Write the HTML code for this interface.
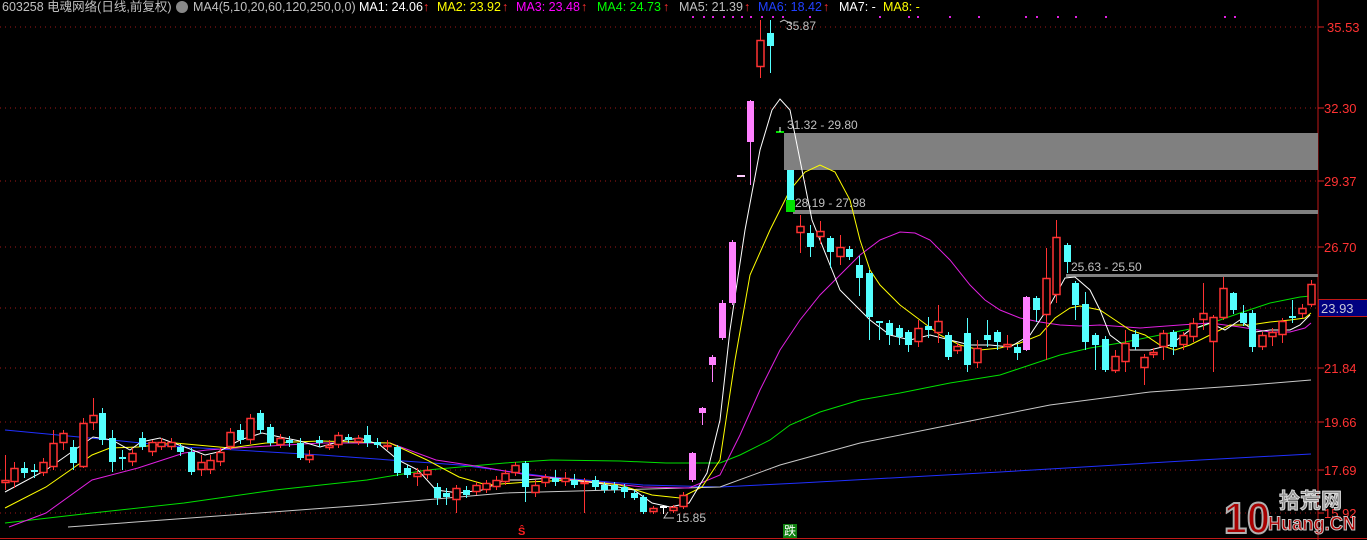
<!DOCTYPE html>
<html><head><meta charset="utf-8">
<style>
html,body{margin:0;padding:0;background:#000;width:1367px;height:540px;overflow:hidden}
svg{display:block}
text{font-family:"Liberation Sans","Noto Sans CJK SC",sans-serif}
</style></head><body>
<svg id="s" width="1367" height="540" viewBox="0 0 1367 540">
<g stroke="#a01818" stroke-width="1" stroke-dasharray="1,4">
<line x1="0" y1="27" x2="1317" y2="27"/><line x1="0" y1="108" x2="1317" y2="108"/><line x1="0" y1="181" x2="1317" y2="181"/><line x1="0" y1="247" x2="1317" y2="247"/><line x1="0" y1="308" x2="1317" y2="308"/><line x1="0" y1="368" x2="1317" y2="368"/><line x1="0" y1="422" x2="1317" y2="422"/><line x1="0" y1="470" x2="1317" y2="470"/><line x1="0" y1="513" x2="1317" y2="513"/>
</g>
<line x1="1318" y1="0" x2="1318" y2="540" stroke="#c01818"/>
<line x1="0" y1="538.5" x2="1367" y2="538.5" stroke="#c01818"/>
<g stroke="#e02020"><line x1="1318" y1="27" x2="1324" y2="27"/><line x1="1318" y1="108" x2="1324" y2="108"/><line x1="1318" y1="181" x2="1324" y2="181"/><line x1="1318" y1="247" x2="1324" y2="247"/><line x1="1318" y1="368" x2="1324" y2="368"/><line x1="1318" y1="422" x2="1324" y2="422"/><line x1="1318" y1="470" x2="1324" y2="470"/><line x1="1318" y1="513" x2="1324" y2="513"/></g>
<g fill="#ff3232" font-size="13">
<text x="1327" y="32">35.53</text><text x="1324" y="113">32.30</text><text x="1324" y="186">29.37</text><text x="1324" y="252">26.70</text><text x="1324" y="373">21.84</text><text x="1324" y="427">19.66</text><text x="1324" y="475">17.69</text><text x="1324" y="518">15.92</text>
</g>
<rect x="1318.5" y="299.5" width="49" height="17" fill="#000080" stroke="#c01818"/>
<text x="1321" y="313" fill="#c8c8d8" font-size="13">23.93</text>
<rect x="784" y="133" width="534" height="37" fill="#808080"/>
<rect x="793" y="210" width="525" height="4" fill="#808080"/>
<rect x="1066" y="274" width="252" height="3" fill="#808080"/>
<g id="ma" fill="none" stroke-width="1"></g>
<g id="cd"></g>
<g font-size="12" fill="#c0c0c0">
<text x="786" y="30">35.87</text>
<text x="787" y="129">31.32 - 29.80</text>
<text x="795" y="207">28.19 - 27.98</text>
<text x="1071" y="271">25.63 - 25.50</text>
<text x="676" y="522">15.85</text>
</g>
<polyline points="780,22 784,20 792,24" fill="none" stroke="#c0c0c0"/>
<polyline points="668,512 664,518 674,518" fill="none" stroke="#c0c0c0"/>
<rect x="786" y="200" width="9" height="12" fill="#00e000"/>
<line x1="776" y1="132" x2="784" y2="132" stroke="#00e000" stroke-width="2"/>
<line x1="780" y1="127" x2="780" y2="132" stroke="#fff"/>
<rect x="737" y="175" width="8" height="2" fill="#ffccff"/>
<g id="dots" fill="#e020e0"></g>
<g font-size="12.5">
<text x="2" y="11" fill="#c0c0c0">603258 电魂网络(日线,前复权)</text>
<circle cx="182" cy="7" r="6" fill="#888"/>
<text x="193" y="11" fill="#c0c0c0">MA4(5,10,20,60,120,250,0,0)</text>
<text x="359" y="11" fill="#ffffff">MA1: 24.06</text><text x="423" y="11" fill="#ff3030">↑</text>
<text x="437" y="11" fill="#ffff00">MA2: 23.92</text><text x="502" y="11" fill="#ff3030">↑</text>
<text x="516" y="11" fill="#ff00ff">MA3: 23.48</text><text x="581" y="11" fill="#ff3030">↑</text>
<text x="597" y="11" fill="#00ff00">MA4: 24.73</text><text x="663" y="11" fill="#ff3030">↑</text>
<text x="679" y="11" fill="#c0c0c0">MA5: 21.39</text><text x="744" y="11" fill="#ff3030">↑</text>
<text x="758" y="11" fill="#2040ff">MA6: 18.42</text><text x="823" y="11" fill="#ff3030">↑</text>
<text x="839" y="11" fill="#ffffff">MA7: -</text>
<text x="883" y="11" fill="#ffff00">MA8: -</text>
</g>
<text x="518" y="535" fill="#ff2020" font-size="11" font-weight="bold">Ŝ</text>
<rect x="783" y="524" width="14" height="14" fill="#108010"/>
<text x="784" y="535" fill="#fff" font-size="12">跌</text>
<g font-weight="bold">
<text x="1224" y="533" font-size="44" fill="#a80000" stroke="#b0b0b0" stroke-width="2" textLength="46" lengthAdjust="spacingAndGlyphs">10</text>
<text x="1279" y="508" font-size="21" fill="#909090" stroke="#d8d8d8" stroke-width="1">拾荒网</text>
<text x="1268" y="530" font-size="19" fill="#b00000" stroke="#c8c8c8" stroke-width="1" textLength="88" lengthAdjust="spacingAndGlyphs">Huang.CN</text>
</g>
</svg>
<script>
var ns="http://www.w3.org/2000/svg";
function el(p,t,a){var e=document.createElementNS(ns,t);for(var k in a)e.setAttribute(k,a[k]);p.appendChild(e);return e;}
var ma=document.getElementById('ma');
var lines=[
["#2030ff","5,430 184,447 321,455 460,465 551,477 643,485 720,487 800,483 1000,472 1200,460 1311,454"],
["#c8c8c8","68,527 367,505 505,493 720,487 780,465 860,443 950,425 1050,405 1150,392 1250,385 1311,380"],
["#00e000","5,523 92,513 184,503 275,490 367,480 427,470 505,463 551,460 620,461 666,463 720,463 740,455 770,440 790,425 820,412 860,400 900,393 950,383 1000,375 1030,365 1060,355 1090,348 1120,343 1160,335 1200,327 1240,313 1270,303 1300,297 1311,296"],
["#e020e0","9,527 46,513 92,480 138,468 184,453 207,450 252,447 321,443 390,443 436,460 482,467 528,475 597,482 643,487 689,488 720,475 740,435 760,390 780,350 800,320 820,295 840,275 860,255 880,240 900,232 915,233 930,240 950,260 970,285 985,300 1000,310 1020,318 1040,322 1060,325 1080,326 1100,325 1140,328 1180,325 1210,323 1240,327 1270,332 1290,332 1305,328 1311,323"],
["#ffff00","5,508 46,487 92,455 110,448 138,447 175,443 230,448 266,443 321,441 390,443 427,460 459,477 487,485 528,482 574,480 620,485 652,495 680,498 702,487 720,460 735,360 750,275 770,230 790,190 805,172 820,165 835,172 850,200 860,240 870,270 880,285 900,305 920,320 940,335 960,345 980,350 1000,348 1020,343 1040,335 1055,318 1070,308 1080,306 1100,310 1115,320 1130,330 1145,335 1160,345 1175,350 1190,345 1210,335 1230,325 1250,325 1270,322 1290,320 1305,318 1311,313"],
["#ffffff","5,492 46,470 93,437 112,440 130,450 141,442 160,438 190,449 205,455 218,452 240,440 262,433 280,437 300,441 320,447 345,440 360,438 380,445 398,460 418,470 436,490 459,493 482,490 505,480 523,480 551,478 597,483 634,490 652,503 670,507 689,503 707,473 720,420 730,330 745,230 760,150 772,110 780,99 790,110 800,160 812,220 830,265 840,290 850,300 870,320 890,335 910,340 930,335 950,340 970,345 990,345 1010,347 1030,335 1050,305 1065,278 1075,277 1090,290 1100,310 1110,335 1130,350 1150,350 1170,345 1190,330 1210,323 1225,330 1240,320 1255,332 1270,330 1290,330 1300,325 1310,315"]];
lines.forEach(function(l){el(ma,'polyline',{points:l[1],stroke:l[0],fill:'none'});});
var C=[
[5,480,483,455,490,'r'],[14,468,482,462,488,'r'],[24,468,473,462,478,'c'],[34,470,472,464,478,'c'],[43,462,473,458,476,'r'],[53,443,467,430,470,'r'],[63,433,443,430,450,'r'],[73,447,463,440,470,'c'],[83,423,467,418,468,'r'],[93,415,423,398,430,'r'],[102,413,440,408,445,'c'],[112,438,462,430,472,'c'],[122,457,459,450,470,'c'],[132,453,462,448,466,'r'],[142,438,447,432,450,'c'],[152,442,452,440,456,'r'],[161,442,447,438,450,'r'],[171,442,447,438,450,'r'],[180,447,452,444,456,'c'],[191,452,472,448,475,'c'],[201,462,470,455,476,'r'],[210,460,470,455,474,'r'],[220,452,462,448,466,'r'],[230,432,447,428,450,'r'],[240,430,440,424,444,'c'],[250,418,440,414,444,'r'],[260,413,430,410,434,'c'],[270,427,443,424,446,'c'],[280,438,445,434,448,'r'],[289,440,443,436,447,'c'],[300,443,458,438,460,'c'],[309,455,460,450,463,'r'],[319,440,443,436,447,'c'],[329,445,448,440,450,'r'],[338,435,445,432,448,'r'],[348,437,440,434,443,'c'],[358,438,442,435,445,'r'],[367,435,443,426,447,'c'],[377,442,445,438,448,'c'],[387,445,447,440,450,'r'],[397,447,473,445,476,'c'],[407,468,475,465,478,'c'],[417,473,477,468,486,'r'],[427,470,475,466,479,'r'],[437,487,498,483,505,'c'],[446,493,497,488,505,'c'],[456,488,500,485,513,'r'],[466,490,495,486,498,'c'],[476,485,492,482,495,'r'],[486,483,490,480,493,'r'],[496,480,487,476,490,'r'],[505,473,482,470,485,'r'],[515,465,473,462,476,'r'],[525,463,487,461,502,'c'],[535,485,493,480,497,'r'],[545,477,483,474,487,'r'],[555,478,482,470,486,'c'],[565,478,482,472,486,'r'],[574,480,485,474,488,'c'],[584,482,484,478,513,'r'],[595,480,487,476,490,'c'],[604,485,490,482,493,'c'],[614,485,490,482,493,'c'],[624,487,492,484,498,'c'],[634,493,498,490,500,'c'],[643,497,512,495,514,'c'],[653,508,512,506,514,'r'],[663,506,508,505,514,'w'],[673,507,511,505,513,'r'],[683,495,507,492,509,'r'],[692,453,480,452,482,'m'],[702,408,413,407,425,'m'],[712,357,365,355,382,'m'],[722,303,338,300,340,'m'],[732,242,303,240,305,'m'],[750,101,142,100,185,'m'],[760,40,67,20,78,'r'],[770,33,46,20,73,'c'],[790,170,200,170,200,'c'],
[800,226,233,215,253,'r'],[810,233,247,225,257,'c'],[820,231,237,221,244,'r'],[830,238,252,236,268,'c'],[840,247,257,235,265,'r'],[849,249,257,246,260,'c'],[859,265,278,256,296,'c'],[869,273,317,270,340,'c'],[879,321,323,321,340,'c'],[889,323,335,320,345,'c'],[899,328,337,325,345,'c'],[908,332,345,330,352,'c'],[918,328,342,320,347,'r'],[928,326,330,317,338,'c'],[938,321,333,305,343,'r'],[948,335,357,332,360,'c'],[957,346,351,343,354,'r'],[967,333,365,318,372,'c'],[977,348,363,340,368,'r'],[987,335,340,320,347,'c'],[997,332,342,330,350,'c'],[1007,344,347,335,350,'r'],[1017,347,353,344,360,'c'],[1026,297,350,296,351,'m'],[1036,298,310,296,322,'c'],[1046,278,315,248,360,'r'],[1056,237,295,220,303,'r'],[1067,245,262,243,273,'c'],[1075,283,305,281,320,'c'],[1085,304,342,292,350,'c'],[1095,335,345,333,370,'c'],[1105,339,370,336,372,'c'],[1115,356,371,350,373,'r'],[1125,343,362,330,372,'r'],[1135,334,347,330,350,'c'],[1144,357,368,354,385,'r'],[1153,352,355,348,358,'r'],[1163,333,347,330,360,'r'],[1173,332,347,330,355,'c'],[1183,335,345,332,350,'r'],[1193,323,337,318,342,'r'],[1203,313,320,283,330,'r'],[1213,317,342,315,372,'r'],[1223,288,318,277,320,'r'],[1233,293,310,292,314,'c'],[1243,313,323,305,326,'c'],[1252,313,347,310,352,'c'],[1262,335,347,332,350,'r'],[1272,332,337,328,346,'r'],[1282,321,335,318,343,'r'],[1292,316,318,300,323,'c'],[1302,308,314,304,318,'r'],[1311,284,305,280,307,'r']];
var cd=document.getElementById('cd');
C.forEach(function(c){
 var x=c[0],t=c[1],b=c[2],wt=c[3],wb=c[4],k=c[5];
 var col={r:'#ff3232',c:'#54ffff',m:'#ff80ff',w:'#ffffff'}[k];
 el(cd,'line',{x1:x+0.5,y1:wt,x2:x+0.5,y2:t,stroke:col});
 el(cd,'line',{x1:x+0.5,y1:b,x2:x+0.5,y2:wb,stroke:col});
 var h=Math.max(b-t,1);
 if(k=='r') el(cd,'rect',{x:x-3,y:t+0.5,width:7,height:Math.max(h-1,1),fill:'#000',stroke:col,'stroke-width':1.5});
 else el(cd,'rect',{x:x-3,y:t,width:7,height:h,fill:col});
});
var dg=document.getElementById('dots');
[692,703,712,723,732,741,750,761,772,782,809,879,908,917,949,978,1025,1036,1057,1075,1105,1224,1234].forEach(function(x){el(dg,'rect',{x:x,y:16,width:2,height:2});});
</script>
</body></html>
